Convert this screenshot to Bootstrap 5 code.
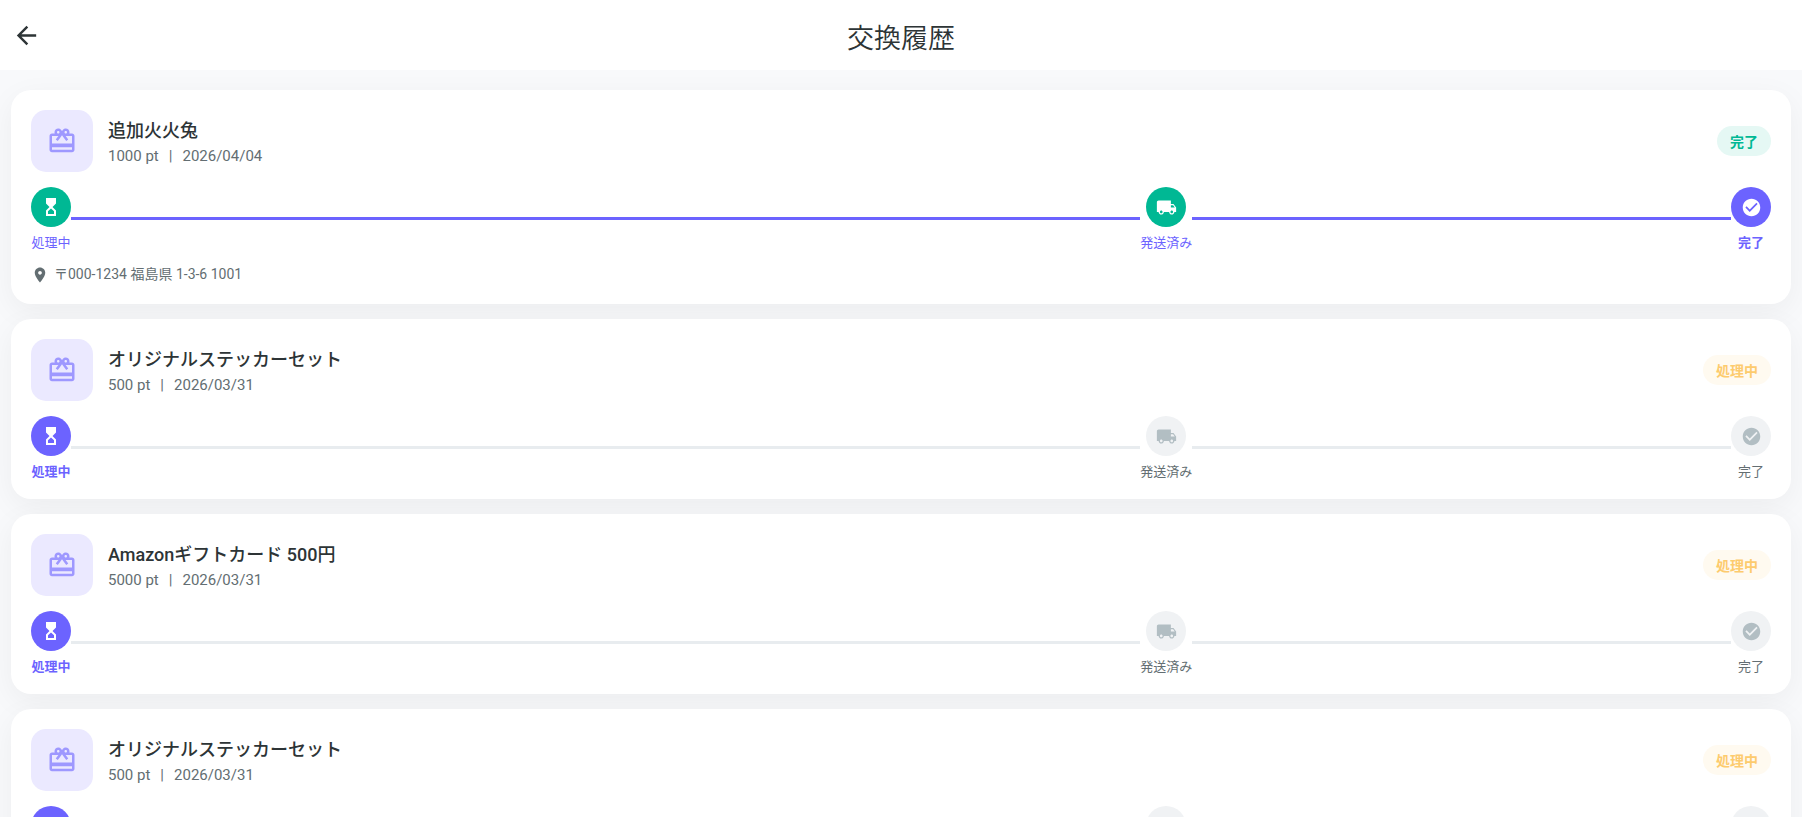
<!DOCTYPE html>
<html lang="ja">
<head>
<meta charset="utf-8">
<meta name="viewport" content="width=device-width, initial-scale=1">
<title>交換履歴</title>
<link href="https://cdn.jsdelivr.net/npm/bootstrap@5.3.0/dist/css/bootstrap.min.css" rel="stylesheet">
<style>
  :root { --brand: #6c63ff; --ok: #00b894; --wait: #fdcb6e; --ink: #2d3436; --muted: #636e72; }
  body { font-family: Roboto, "Noto Sans CJK JP", sans-serif; background: #f8f9fb; color: var(--ink); }
  svg { fill: currentColor; display: block; flex: none; }
  .topbar { height: 70px; padding: 0 12px; }
  .topbar h1 { font-size: 27px; font-weight: 350; line-height: 40px; padding-top: 8px; }
  .topbar .side { width: 29px; }
  .back { color: var(--ink); }
  .history { padding: 20px 11px; gap: 15px; }
  .entry { border: 0; border-radius: 20px; padding: 20px; box-shadow: 0 8px 30px rgba(0, 0, 0, .05); gap: 15px; }
  .summary { gap: 15px; }
  .thumb { width: 62px; height: 62px; border-radius: 15px; background: #ebe9ff; color: #9e98ff; }
  .entry-title { font-size: 18px; font-weight: 500; line-height: 26px; padding-top: 4px; }
  .entry-meta { font-size: 15px; line-height: 24px; color: var(--muted); gap: 10px; }
  .state { height: 30px; padding: 2px 13px 0; font-size: 14px; font-weight: 700; }
  .state-ok { background: #e5f8f4; color: var(--ok); }
  .state-wait { background: #fffaf0; color: var(--wait); }
  .step { min-width: 40px; gap: 8px; font-size: 13px; line-height: 15px; color: var(--muted); }
  .dot { width: 40px; height: 40px; background: #f0f2f4; color: #b2bec3; }
  .step.done, .step.current { color: var(--brand); }
  .step.current { font-weight: 700; }
  .done .dot { background: var(--ok); color: #fff; }
  .current .dot { background: var(--brand); color: #fff; }
  .rail { height: 3px; background: #e8ecef; flex: 1 1 4px; }
  .rail-long { flex: 2 1 0; }
  .rail.filled { background: var(--brand); }
  .address { font-size: 14px; line-height: 19px; gap: 5px; color: var(--muted); }
</style>
</head>
<body>
<svg class="d-none" aria-hidden="true">
  <symbol id="gift" viewBox="0 0 24 24"><path d="M20 6h-2.18c.11-.31.18-.65.18-1 0-1.66-1.34-3-3-3-1.05 0-1.96.54-2.5 1.35l-.5.67-.5-.68C10.96 2.54 10.05 2 9 2 7.34 2 6 3.34 6 5c0 .35.07.69.18 1H4c-1.11 0-1.99.89-1.99 2L2 19c0 1.11.89 2 2 2h16c1.11 0 2-.89 2-2V8c0-1.11-.89-2-2-2zm-5-2c.55 0 1 .45 1 1s-.45 1-1 1-1-.45-1-1 .45-1 1-1zM9 4c.55 0 1 .45 1 1s-.45 1-1 1-1-.45-1-1 .45-1 1-1zm11 15H4v-2h16v2zm0-5H4V8h5.08L7 10.83 8.62 12 11 8.76l1-1.36 1 1.36L15.38 12 17 10.83 14.92 8H20v6z"/></symbol>
  <symbol id="hourglass" viewBox="0 0 20 20"><path fill-rule="evenodd" d="M5 1h10v5.5L11.5 10l3.500 3.500V19H5v-5.500L8.500 10 5 6.500zM10 11.500L7 14.200V17h6v-2.800z"/></symbol>
  <symbol id="truck" viewBox="0 0 24 24"><path d="M20 8h-3V4H3c-1.1 0-2 .9-2 2v11h2c0 1.66 1.34 3 3 3s3-1.34 3-3h6c0 1.66 1.34 3 3 3s3-1.34 3-3h2v-5l-3-4zM6 18.5c-.83 0-1.5-.67-1.5-1.5s.67-1.5 1.5-1.5 1.5.67 1.5 1.5-.67 1.5-1.5 1.5zm13.5-9l1.96 2.5H17V9.5h2.5zm-1.5 9c-.83 0-1.5-.67-1.5-1.5s.67-1.5 1.5-1.5 1.5.67 1.5 1.5-.67 1.5-1.5 1.5z"/></symbol>
  <symbol id="check" viewBox="0 0 24 24"><path d="M12 2C6.48 2 2 6.48 2 12s4.48 10 10 10 10-4.48 10-10S17.52 2 12 2zm-2 15l-5-5 1.41-1.41L10 14.17l7.59-7.59L19 8l-9 9z"/></symbol>
  <symbol id="pin" viewBox="0 0 24 24"><path d="M12 2C8.13 2 5 5.13 5 9c0 5.25 7 13 7 13s7-7.75 7-13c0-3.87-3.13-7-7-7zm0 9.5c-1.38 0-2.5-1.12-2.5-2.5s1.12-2.5 2.5-2.5 2.5 1.12 2.5 2.5-1.12 2.5-2.5 2.5z"/></symbol>
</svg>

<header class="topbar bg-white d-flex align-items-center justify-content-between">
  <div class="side"><button type="button" class="back btn p-0 border-0" aria-label="戻る"><svg width="29" height="29" viewBox="0 0 24 24"><path d="M20 11H7.83l5.59-5.59L12 4l-8 8 8 8 1.41-1.41L7.83 13H20v-2z"/></svg></button></div>
  <h1 class="mb-0">交換履歴</h1>
  <div class="side"></div>
</header>

<main class="history d-flex flex-column">
  <article class="entry card">
    <div class="summary d-flex align-items-center">
      <div class="thumb d-flex align-items-center justify-content-center"><svg width="30" height="30"><use href="#gift"/></svg></div>
      <div class="flex-grow-1">
        <h2 class="entry-title mb-0">追加火火兔</h2>
        <div class="entry-meta d-flex"><span>1000 pt</span><span>|</span><span>2026/04/04</span></div>
      </div>
      <span class="state state-ok rounded-pill d-flex align-items-center">完了</span>
    </div>
    <div class="d-flex align-items-center">
      <div class="step done d-flex flex-column align-items-center"><span class="dot rounded-circle d-flex align-items-center justify-content-center"><svg width="20" height="20"><use href="#hourglass"/></svg></span>処理中</div>
      <div class="rail rail-long filled"></div>
      <div class="step done d-flex flex-column align-items-center"><span class="dot rounded-circle d-flex align-items-center justify-content-center"><svg width="21" height="21"><use href="#truck"/></svg></span>発送済み</div>
      <div class="rail filled"></div>
      <div class="step current d-flex flex-column align-items-center"><span class="dot rounded-circle d-flex align-items-center justify-content-center"><svg width="21" height="21"><use href="#check"/></svg></span>完了</div>
    </div>
    <div class="address d-flex align-items-center"><svg width="18" height="18"><use href="#pin"/></svg>〒000-1234 福島県 1-3-6 1001</div>
  </article>

  <article class="entry card">
    <div class="summary d-flex align-items-center">
      <div class="thumb d-flex align-items-center justify-content-center"><svg width="30" height="30"><use href="#gift"/></svg></div>
      <div class="flex-grow-1">
        <h2 class="entry-title mb-0">オリジナルステッカーセット</h2>
        <div class="entry-meta d-flex"><span>500 pt</span><span>|</span><span>2026/03/31</span></div>
      </div>
      <span class="state state-wait rounded-pill d-flex align-items-center">処理中</span>
    </div>
    <div class="d-flex align-items-center">
      <div class="step current d-flex flex-column align-items-center"><span class="dot rounded-circle d-flex align-items-center justify-content-center"><svg width="20" height="20"><use href="#hourglass"/></svg></span>処理中</div>
      <div class="rail rail-long"></div>
      <div class="step d-flex flex-column align-items-center"><span class="dot rounded-circle d-flex align-items-center justify-content-center"><svg width="21" height="21"><use href="#truck"/></svg></span>発送済み</div>
      <div class="rail"></div>
      <div class="step d-flex flex-column align-items-center"><span class="dot rounded-circle d-flex align-items-center justify-content-center"><svg width="21" height="21"><use href="#check"/></svg></span>完了</div>
    </div>
  </article>

  <article class="entry card">
    <div class="summary d-flex align-items-center">
      <div class="thumb d-flex align-items-center justify-content-center"><svg width="30" height="30"><use href="#gift"/></svg></div>
      <div class="flex-grow-1">
        <h2 class="entry-title mb-0">Amazonギフトカード 500円</h2>
        <div class="entry-meta d-flex"><span>5000 pt</span><span>|</span><span>2026/03/31</span></div>
      </div>
      <span class="state state-wait rounded-pill d-flex align-items-center">処理中</span>
    </div>
    <div class="d-flex align-items-center">
      <div class="step current d-flex flex-column align-items-center"><span class="dot rounded-circle d-flex align-items-center justify-content-center"><svg width="20" height="20"><use href="#hourglass"/></svg></span>処理中</div>
      <div class="rail rail-long"></div>
      <div class="step d-flex flex-column align-items-center"><span class="dot rounded-circle d-flex align-items-center justify-content-center"><svg width="21" height="21"><use href="#truck"/></svg></span>発送済み</div>
      <div class="rail"></div>
      <div class="step d-flex flex-column align-items-center"><span class="dot rounded-circle d-flex align-items-center justify-content-center"><svg width="21" height="21"><use href="#check"/></svg></span>完了</div>
    </div>
  </article>

  <article class="entry card">
    <div class="summary d-flex align-items-center">
      <div class="thumb d-flex align-items-center justify-content-center"><svg width="30" height="30"><use href="#gift"/></svg></div>
      <div class="flex-grow-1">
        <h2 class="entry-title mb-0">オリジナルステッカーセット</h2>
        <div class="entry-meta d-flex"><span>500 pt</span><span>|</span><span>2026/03/31</span></div>
      </div>
      <span class="state state-wait rounded-pill d-flex align-items-center">処理中</span>
    </div>
    <div class="d-flex align-items-center">
      <div class="step current d-flex flex-column align-items-center"><span class="dot rounded-circle d-flex align-items-center justify-content-center"><svg width="20" height="20"><use href="#hourglass"/></svg></span>処理中</div>
      <div class="rail rail-long"></div>
      <div class="step d-flex flex-column align-items-center"><span class="dot rounded-circle d-flex align-items-center justify-content-center"><svg width="21" height="21"><use href="#truck"/></svg></span>発送済み</div>
      <div class="rail"></div>
      <div class="step d-flex flex-column align-items-center"><span class="dot rounded-circle d-flex align-items-center justify-content-center"><svg width="21" height="21"><use href="#check"/></svg></span>完了</div>
    </div>
  </article>
</main>
<script src="https://cdn.jsdelivr.net/npm/bootstrap@5.3.0/dist/js/bootstrap.bundle.min.js"></script>
</body>
</html>
